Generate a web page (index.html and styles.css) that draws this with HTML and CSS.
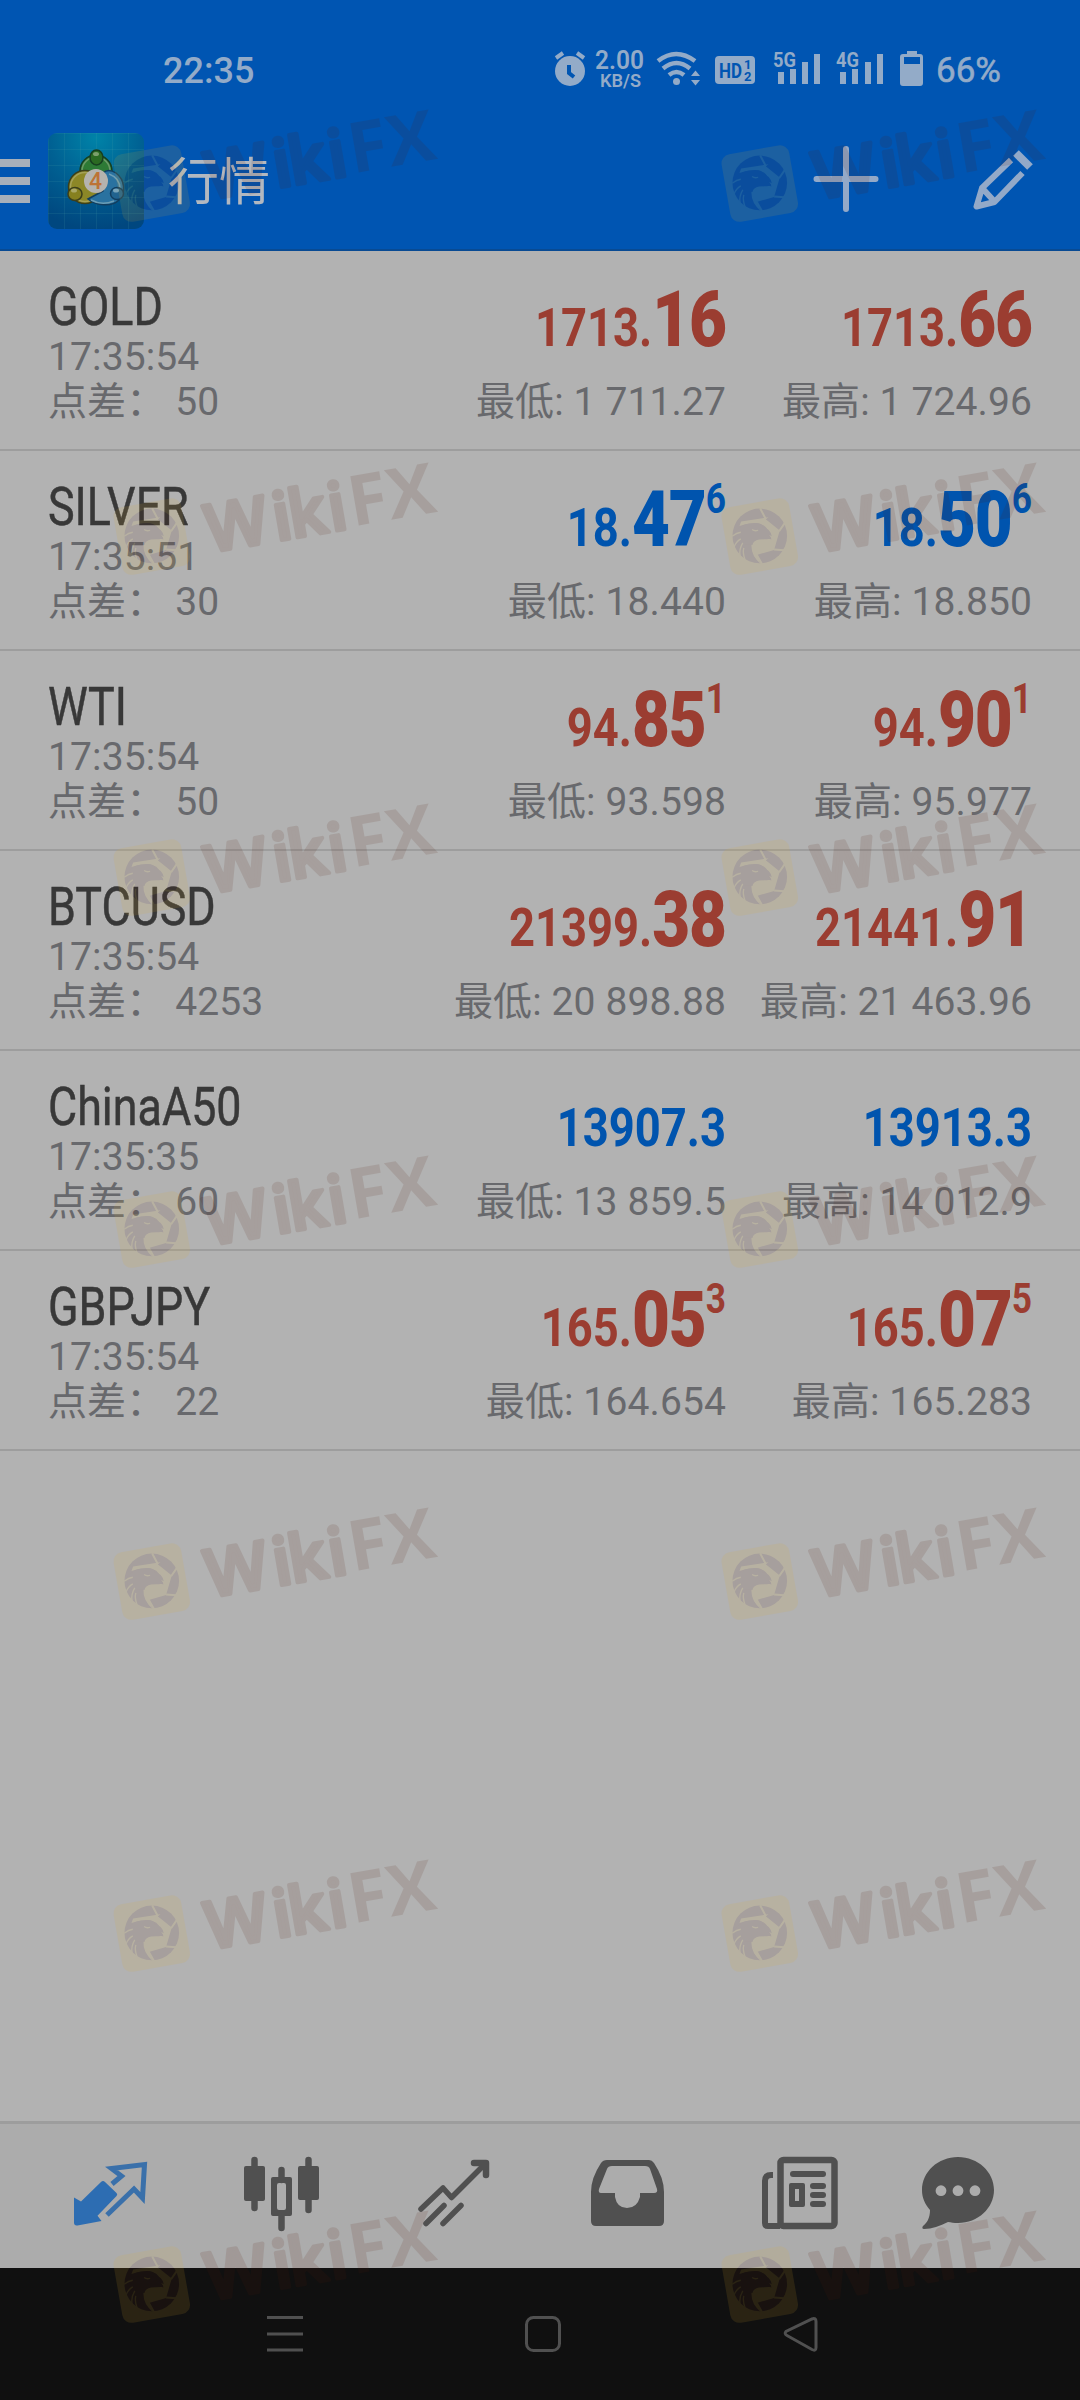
FILE: index.html
```
<!DOCTYPE html>
<html lang="zh-CN">
<head>
    <meta charset="UTF-8">
    <meta name="viewport" content="width=device-width, initial-scale=1.0">
    <title>行情</title>
    <link rel="stylesheet" href="styles.css">
</head>
<body>

    <div class="screen">
        <header class="header">
            <div class="status-bar">
                <span class="clock">22:35</span>
                <div class="status-icons">
                    <svg class="icon-alarm" viewBox="552 48 36 40">
                        <circle cx="570" cy="71" r="15" />
                        <path class="line" d="M556 58l7-5M577 53l7 5" />
                        <path class="cut" d="M569 65v8l5 4" />
                    </svg>
                    <svg class="net-speed" viewBox="595 40 52 56">
                        <text x="596" y="69" font-size="26" textLength="49" lengthAdjust="spacingAndGlyphs">2.00</text>
                        <text x="601" y="86.500" font-size="18.500" textLength="41" lengthAdjust="spacingAndGlyphs">KB/S</text>
                    </svg>
                    <svg class="icon-wifi" viewBox="656 48 46 40">
                        <path class="line" d="M658 61q18-14 37 0M663 68.500q13.500-11 27 0M669 75q7.500-6 15 0" />
                        <circle cx="676.500" cy="81.500" r="3.500" />
                        <path d="M691 76l4.500-5.500 4.500 5.500zM691 80l4.500 5.500 4.500-5.500z" />
                    </svg>
                    <svg class="icon-hd" viewBox="715 48 40 40">
                        <rect x="715" y="56" width="40" height="28" rx="4" />
                        <text x="719" y="78" font-size="21" textLength="23" lengthAdjust="spacingAndGlyphs">HD</text>
                        <text x="744" y="69" font-size="13">1</text>
                        <text x="744" y="81" font-size="13">2</text>
                    </svg>
                    <svg class="icon-signal" viewBox="773 48 48 40">
                        <text x="773" y="67" font-size="21" textLength="23" lengthAdjust="spacingAndGlyphs">5G</text>
                        <path d="M778 72h6v12h-6zM790 69h6v15h-6zM802 62h6v22h-6zM814 54h6v30h-6z" />
                    </svg>
                    <svg class="icon-signal" viewBox="773 48 48 40">
                        <text x="773" y="67" font-size="21" textLength="23" lengthAdjust="spacingAndGlyphs">4G</text>
                        <path d="M777 72h6v12h-6zM789 69h6v15h-6zM802 62h6v22h-6zM814 54h6v30h-6z" />
                    </svg>
                    <svg class="icon-battery" viewBox="899 48 25 40">
                        <path fill-rule="evenodd" d="M907 51h10v3h3q3 0 3 3v26q0 3-3 3h-17q-3 0-3-3v-26q0-3 3-3h4zM904 57v7h16v-7z" />
                    </svg>
                    <span class="battery-level">66%</span>
                </div>
            </div>

            <div class="toolbar">
                <svg class="icon-menu" viewBox="0 0 30 44">
                    <path d="M0 0h30v8H0zM0 18h30v8H0zM0 36h30v8H0z" />
                </svg>
                <svg class="app-logo" viewBox="48 131 96 96">
                    <defs>
                        <radialGradient id="logoBg" cx="0.5" cy="0.05" r="0.95">
                            <stop offset="0" stop-color="#0083a8" />
                            <stop offset="0.5" stop-color="#006193" />
                            <stop offset="1" stop-color="#00477f" />
                        </radialGradient>
                        <pattern id="logoGrid" x="48" y="131" width="16" height="16" patternUnits="userSpaceOnUse">
                            <path d="M0 0.500h16M0.500 0v16" stroke="#5aa" stroke-opacity="0.13" fill="none" />
                        </pattern>
                    </defs>
                    <rect x="48" y="131" width="96" height="96" rx="9" fill="url(#logoBg)" />
                    <rect x="48" y="131" width="96" height="96" rx="9" fill="url(#logoGrid)" />
                    <g stroke-width="1.500">
                        <circle cx="96" cy="169" r="16" fill="#2d7a35" stroke="#173f20" />
                        <circle cx="96" cy="169" r="14" fill="none" stroke="#6b9a66" />
                        <circle cx="85" cy="185" r="16.500" fill="#8c8727" stroke="#3c3f1b" />
                        <circle cx="85" cy="185" r="14.500" fill="none" stroke="#a5a158" />
                        <path d="M88 197c8 7 24 8 31 1 7-8 6-20-3-27-6-4-10-3-13 0v18z" fill="#2a72a0" stroke="#123e5f" />
                        <path d="M109 172q11 4 11 15M91 198q11 6 23 1" fill="none" stroke="#6c9db5" />
                        <ellipse cx="96.500" cy="155.500" rx="6.500" ry="7.500" fill="#2b6a22" stroke="#173f20" />
                        <ellipse cx="75" cy="192" rx="7" ry="6.500" fill="#86801f" stroke="#3c3f1b" />
                        <ellipse cx="117" cy="191.500" rx="6.500" ry="6" fill="#21638f" stroke="#123e5f" />
                        <ellipse cx="96" cy="152" rx="3" ry="2" fill="#7c9f6c" stroke="none" />
                        <ellipse cx="74" cy="188.500" rx="3" ry="2" fill="#aba867" stroke="none" />
                        <ellipse cx="116" cy="188.500" rx="3" ry="2" fill="#78a4ba" stroke="none" />
                        <circle cx="96" cy="179" r="12" fill="#b5b3ae" stroke="none" />
                    </g>
                    <text class="logo-digit" x="95.500" y="187" text-anchor="middle">4</text>
                </svg>
                <h1 class="title">行情</h1>
                <svg class="icon-add" viewBox="811 144 70 70">
                    <path d="M816.500 179h59M846 149v60" />
                </svg>
                <svg class="icon-edit" viewBox="968 144 70 70">
                    <path d="M1011 160l-29 28-5.500 18.500 18-4.500 28-29M983 189l11 12" />
                    <path class="cap" d="M1016 153l14 14" />
                </svg>
            </div>
        </header>

        <main class="quotes">
            <div class="quote down">
                <div class="symbol">
                    <h2>GOLD</h2>
                    <p>17:35:54</p>
                    <p>点差： 50</p>
                </div>
                <div class="side">
                    <div class="price">1713.<b>16</b></div>
                    <p>最低: 1 711.27</p>
                </div>
                <div class="side">
                    <div class="price">1713.<b>66</b></div>
                    <p>最高: 1 724.96</p>
                </div>
            </div>

            <div class="quote up">
                <div class="symbol">
                    <h2>SILVER</h2>
                    <p>17:35:51</p>
                    <p>点差： 30</p>
                </div>
                <div class="side">
                    <div class="price">18.<b>47</b><sup>6</sup></div>
                    <p>最低: 18.440</p>
                </div>
                <div class="side">
                    <div class="price">18.<b>50</b><sup>6</sup></div>
                    <p>最高: 18.850</p>
                </div>
            </div>

            <div class="quote down">
                <div class="symbol">
                    <h2>WTI</h2>
                    <p>17:35:54</p>
                    <p>点差： 50</p>
                </div>
                <div class="side">
                    <div class="price">94.<b>85</b><sup>1</sup></div>
                    <p>最低: 93.598</p>
                </div>
                <div class="side">
                    <div class="price">94.<b>90</b><sup>1</sup></div>
                    <p>最高: 95.977</p>
                </div>
            </div>

            <div class="quote down">
                <div class="symbol">
                    <h2>BTCUSD</h2>
                    <p>17:35:54</p>
                    <p>点差： 4253</p>
                </div>
                <div class="side">
                    <div class="price">21399.<b>38</b></div>
                    <p>最低: 20 898.88</p>
                </div>
                <div class="side">
                    <div class="price">21441.<b>91</b></div>
                    <p>最高: 21 463.96</p>
                </div>
            </div>

            <div class="quote up">
                <div class="symbol">
                    <h2>ChinaA50</h2>
                    <p>17:35:35</p>
                    <p>点差： 60</p>
                </div>
                <div class="side">
                    <div class="price">13907.3</div>
                    <p>最低: 13 859.5</p>
                </div>
                <div class="side">
                    <div class="price">13913.3</div>
                    <p>最高: 14 012.9</p>
                </div>
            </div>

            <div class="quote down">
                <div class="symbol">
                    <h2>GBPJPY</h2>
                    <p>17:35:54</p>
                    <p>点差： 22</p>
                </div>
                <div class="side">
                    <div class="price">165.<b>05</b><sup>3</sup></div>
                    <p>最低: 164.654</p>
                </div>
                <div class="side">
                    <div class="price">165.<b>07</b><sup>5</sup></div>
                    <p>最高: 165.283</p>
                </div>
            </div>
        </main>

        <nav class="tabs">
            <!-- quotes -->
            <svg class="tab active" viewBox="69 2152 80 80">
                <path d="M74 2197.500l7 4 20-19.500q2-2 4 0l11.500 11q1.500 1.500 0 3l-19 19.700 4 5.300-24 4.500q-3.500.500-3.500-3z" />
                <path class="line thin" d="M112 2184l9.500-8-10-7.500 33-4-2 33.500-8.500-9-27 26" />
            </svg>
            <!-- chart -->
            <svg class="tab" viewBox="242 2152 80 80">
                <path class="line" d="M254.500 2160v48M281.500 2170v10M281.500 2214v14M308.500 2160v50" />
                <rect x="244" y="2166" width="21" height="35" rx="2" />
                <rect x="298" y="2166" width="21" height="34" rx="2" />
                <path fill-rule="evenodd" d="M273 2177h17q2 0 2 2v35q0 2-2 2h-17q-2 0-2-2v-35q0-2 2-2zM279 2183q-2 0-2 2v23q0 2 2 2h5q2 0 2-2v-23q0-2-2-2z" />
            </svg>
            <!-- trade -->
            <svg class="tab" viewBox="414 2152 80 80">
                <path class="line thin" d="M421 2209l22-21 8.500 9.500 34-34M426 2223.500l18-18M443 2223.500l18-18" />
                <path class="line" d="M474 2163h12v12" />
            </svg>
            <!-- history -->
            <svg class="tab" viewBox="586 2152 80 80">
                <path fill-rule="evenodd" d="M606 2160h42q3 0 5 3 10 15 10 29v29q0 5-5 5h-63q-5 0-5-5v-29q0-14 10-29 2-3 6-3zM611 2166q-4 0-5 3l-8 20q-1 4 2 4h14v4q2 11 12 11t13-11v-4h14q4 0 3-4l-7-20q-1-3-5-3z" />
            </svg>
            <!-- news -->
            <svg class="tab" viewBox="759 2152 80 80">
                <rect class="line" x="780.500" y="2160" width="54" height="66" rx="3" />
                <path class="line flat" d="M773 2175h-2q-6 0-6 6v42q0 3 3 3h12" />
                <rect x="790" y="2171" width="36" height="6" rx="3" />
                <path fill-rule="evenodd" d="M791 2183h12q2 0 2 2v20q0 2-2 2h-12q-2 0-2-2v-20q0-2 2-2zM795 2189v12h4v-12z" />
                <rect x="810" y="2183" width="16" height="6" rx="3" />
                <rect x="810" y="2192" width="16" height="6" rx="3" />
                <rect x="810" y="2201" width="16" height="6" rx="3" />
            </svg>
            <!-- chat -->
            <svg class="tab" viewBox="918 2152 80 80">
                <path d="M958 2157c20 0 36 15 36 33s-16 33-36 33c-4 0-7-.500-10-1-8 4-16 7-24 7-2 0-2-2-1-3 4-3 7-8 7-16-5-6-8-12-8-20 0-18 16-33 36-33z" />
                <g class="dots">
                    <circle cx="941" cy="2190.700" r="5.400" />
                    <circle cx="958" cy="2190.700" r="5.400" />
                    <circle cx="975" cy="2190.700" r="5.400" />
                </g>
            </svg>
        </nav>

        <div class="system-nav">
            <svg viewBox="265 2314 40 40"><path d="M267 2317.500h36M267 2334h36M267 2350h36" /></svg>
            <svg viewBox="523 2314 40 40"><rect x="526.500" y="2317.500" width="33" height="33" rx="7" /></svg>
            <svg viewBox="781 2314 40 40"><path d="M786 2331.500q-2 2.500 1 4l25 14q4 2 4-2v-26q0-4-4-2.500z" /></svg>
        </div>

        <!-- watermark layer -->
        <svg class="watermark" viewBox="0 0 1080 2400">
            <defs>
                <g id="mark">
                    <g transform="translate(-0.500 0) scale(0.333)">
                        <rect x="84" y="172" width="206" height="206" rx="28" transform="rotate(-10 187 275)" fill="#e0ae2d" />
                        <circle cx="187" cy="273" r="82" />
                        <path fill="#e0ae2d" d="M205 223L247 257 230 315 178 330 190 357q-30-25-28-59 4-18 28-19l20 1 12 4q-2-12-14-18l-14-2 18-4q-6-22-34-25l-34 3-18 5 5-13 82-13z" />
                        <path d="M112 262q20-28 60-28 24 0 24 13 22 3 27 27-5-4-11-3l9 8q-5 4-20 4l-16 1q-18 4-20 16l-50-6z" />
                        <path fill="none" stroke="#e0ae2d" stroke-width="6" d="M188 190l17 32M263 233l-18 26M230 314l30 2M177 328l17 30" />
                        <path fill="none" stroke="#e0ae2d" stroke-width="4" d="M104 274q14-10 26-12M110 306q6-16 20-24M128 334q-4-20 8-40M143 345q-8-20-4-36M164 254q8 6 18 2" />
                    </g>
                    <text class="round" transform="translate(119.500 107.500) rotate(-9.800)" x="0 68 84 124">Wiki</text>
                    <text transform="translate(262.500 81.500) rotate(-9.800)" textLength="87" lengthAdjust="spacingAndGlyphs">FX</text>
                </g>
                <g id="markRow">
                    <use href="#mark" x="90" />
                    <use href="#mark" x="698" />
                </g>
            </defs>
            <use href="#markRow" y="92" />
            <use href="#markRow" y="445" />
            <use href="#markRow" y="786" />
            <use href="#markRow" y="1138" />
            <use href="#markRow" y="1490" />
            <use href="#markRow" y="1842" />
            <use href="#markRow" y="2193" />
        </svg>
    </div>

</body>
</html>
```
FILE: styles.css
```
* {
    box-sizing: border-box;
}

body {
    margin: 0;
    background-color: #b2b2b2;
    font-family: Roboto, "Noto Sans CJK SC", sans-serif;
}

h1, h2, p {
    margin: 0;
    font-weight: 400;
}

svg {
    display: block;
    flex-shrink: 0;
}

.screen {
    position: relative;
    display: flex;
    flex-direction: column;
    width: 1080px;
    height: 2400px;
    overflow: hidden;
}

/* header */
.header {
    height: 251px;
    background-color: #0055b2;
    border-bottom: 2px solid #084a93;
}

.status-bar {
    display: flex;
    justify-content: space-between;
    align-items: center;
    height: 92px;
    padding: 48px 79px 4px 163px;
    color: #93abc8;
}

.clock {
    font-size: 36px;
    font-weight: 500;
    line-height: 40px;
    padding-top: 5px;
}

.status-icons {
    display: flex;
    align-items: center;
    height: 40px;
    fill: #93abc8;
}

.status-icons text {
    font-weight: 700;
}

.status-icons .line {
    fill: none;
    stroke: #93abc8;
    stroke-width: 4.5;
}

.icon-alarm {
    width: 36px;
    height: 40px;
}

.icon-alarm .line {
    stroke-width: 4;
}

.icon-alarm .cut {
    fill: none;
    stroke: #0055b2;
    stroke-width: 4;
}

.net-speed {
    width: 52px;
    height: 56px;
    margin: 0 10px 0 6px;
}

.net-speed text {
    font-weight: 600;
}

.icon-wifi {
    width: 46px;
    height: 40px;
    margin-right: 13px;
}

.icon-hd {
    width: 40px;
    height: 40px;
    margin-right: 18px;
}

.icon-hd text {
    fill: #0055b2;
}

.icon-signal {
    width: 48px;
    height: 40px;
    margin-right: 15px;
}

.icon-battery {
    width: 25px;
    height: 40px;
    margin-right: 12px;
}

.battery-level {
    width: 65px;
    font-size: 35px;
    line-height: 40px;
    padding-top: 5px;
    -webkit-text-stroke: 0.6px #93abc8;
}

.toolbar {
    display: flex;
    align-items: center;
    height: 174px;
    padding: 4px 42px 0 0;
}

.icon-menu {
    width: 30px;
    height: 44px;
    margin-right: 18px;
    fill: #a7afba;
}

.app-logo {
    width: 96px;
    height: 96px;
}

.logo-digit {
    font-size: 23px;
    font-weight: 500;
    fill: #bd7335;
}

.title {
    flex: 1;
    margin-left: 24px;
    padding-top: 3px;
    font-size: 51px;
    line-height: 60px;
    color: #b2b8c0;
}

.icon-add,
.icon-edit {
    width: 70px;
    height: 70px;
    margin-bottom: 4px;
    fill: none;
    stroke: #93a9c8;
    stroke-width: 6;
    stroke-linecap: round;
    stroke-linejoin: round;
}

.icon-add {
    margin-right: 87px;
}

.icon-edit {
    stroke-linecap: butt;
}

.icon-edit .cap {
    stroke-width: 8;
}

/* quotes */
.quotes {
    flex: 1;
}

.quote {
    display: grid;
    grid-template-columns: 1fr 340px 306px;
    height: 200px;
    padding: 28px 48px 0;
    border-bottom: 2px solid #9d9d9d;
}

.quote p {
    font-size: 39px;
    line-height: 45px;
    letter-spacing: 0.12px;
    color: #68696d;
    white-space: nowrap;
}

.symbol h2 {
    font-size: 54px;
    line-height: 56px;
    color: #383838;
    -webkit-text-stroke: 0.5px #383838;
    transform: scaleX(0.83);
    transform-origin: left;
}

.side {
    padding-top: 10px;
    text-align: right;
}

.price {
    height: 78px;
    margin-bottom: 13px;
    font-size: 54px;
    font-weight: 700;
    line-height: 78px;
    white-space: nowrap;
    transform: scaleX(0.84);
    transform-origin: right;
}

.price b {
    font-size: 78px;
    letter-spacing: -1.3px;
    line-height: 0;
}

.price sup {
    position: relative;
    top: -33px;
    font-size: 42px;
    line-height: 0;
    vertical-align: baseline;
}

.up .price {
    color: #0054ae;
}

.down .price {
    color: #9b3d31;
}

/* bottom tabs */
.tabs {
    display: flex;
    gap: 92.5px;
    height: 147px;
    padding: 28px 0 0 69px;
    background-color: #acacac;
    border-top: 3px solid #9d9d9d;
}

.tab {
    width: 80px;
    height: 80px;
    fill: #505050;
    stroke: none;
}

.tab:last-child {
    margin-left: -13.5px;
}

.tab .line {
    fill: none;
    stroke: #505050;
    stroke-width: 6.5;
    stroke-linecap: round;
    stroke-linejoin: round;
}

.tab .thin {
    stroke-width: 5.5;
}

.tab .flat {
    stroke-width: 6;
    stroke-linecap: butt;
}

.tab.active {
    fill: #2d6db2;
}

.tab.active .line {
    stroke: #3a70aa;
    stroke-width: 5;
    stroke-linecap: butt;
    stroke-linejoin: miter;
}

.tab .dots {
    fill: #acacac;
}

/* android navigation */
.system-nav {
    display: flex;
    justify-content: center;
    align-items: center;
    gap: 218px;
    height: 132px;
    padding-left: 6px;
    background-color: #101010;
}

.system-nav svg {
    width: 40px;
    height: 40px;
    fill: none;
    stroke: #505050;
    stroke-width: 3;
}

/* watermark over everything */
.watermark {
    position: absolute;
    top: 0;
    left: 0;
    width: 1080px;
    height: 2400px;
    opacity: 0.12;
    fill: #541a0a;
    pointer-events: none;
}

.watermark text {
    font-family: "Open Sans", Roboto, sans-serif;
    font-size: 70px;
    font-weight: 700;
}

.watermark .round {
    font-size: 66px;
    font-weight: 600;
    stroke: #541a0a;
    stroke-width: 4;
    stroke-linejoin: round;
}
```
